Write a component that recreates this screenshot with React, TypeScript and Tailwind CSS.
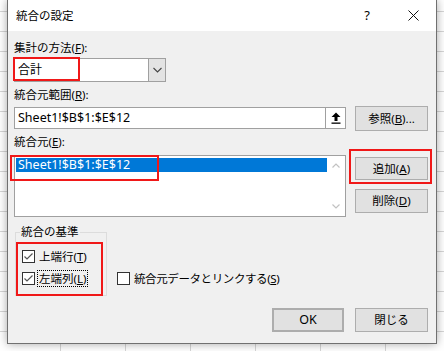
import React from "react";

const font = "font-['Noto_Sans','Noto_Sans_CJK_JP',sans-serif]";

function Key({ k }: { k: string }) {
  return <span className="underline underline-offset-[1px]">{k}</span>;
}

function Btn({ children, className = "" }: { children: React.ReactNode; className?: string }) {
  return (
    <div
      className={`flex items-center justify-center bg-[#e1e1e1] border border-[#adadad] text-[11.5px] leading-[16px] text-black ${className}`}
    >
      {children}
    </div>
  );
}

function CheckBox({ checked }: { checked: boolean }) {
  return (
    <div className="w-[13px] h-[13px] border border-[#333] bg-white flex items-center justify-center">
      {checked && (
        <svg width="11" height="11" viewBox="0 0 11 11">
          <polyline points="1.5,5.5 4,8 9.5,2.5" fill="none" stroke="#555" strokeWidth="1.2" />
        </svg>
      )}
    </div>
  );
}

function CheckRow({ checked, label, k, focus = false }: { checked: boolean; label: string; k: string; focus?: boolean }) {
  return (
    <div className="flex items-center gap-[2px] h-[18px]">
      <CheckBox checked={checked} />
      <span
        className={`px-[1px] border text-[11.5px] leading-[15px] ${focus ? "border-dotted border-black" : "border-transparent"}`}
      >
        {label}(<Key k={k} />)
      </span>
    </div>
  );
}

export default function App() {
  return (
    <div
      className={`relative w-[444px] h-[351px] overflow-hidden bg-white bg-[linear-gradient(to_right,#d6d6d6_1px,transparent_1px),linear-gradient(to_bottom,#d6d6d6_1px,transparent_1px)] bg-[size:65px_20px] bg-[position:60px_11px] ${font}`}
    >
      <div className="ml-[7px] w-[430px] h-[344px] flex flex-col border-x border-b border-[#707070] shadow-[0_0_9px_rgba(0,0,0,0.35)]">
        {/* title bar */}
        <div className="h-[31px] bg-white flex items-center">
          <span className="pl-[8px] text-[11.5px] leading-[16px] text-black">統合の設定</span>
          <div className="ml-auto flex h-full">
            <div className="w-[46px] flex items-center justify-center text-[13px] text-black">?</div>
            <div className="w-[46px] flex items-center justify-center">
              <svg width="11" height="11" viewBox="0 0 11 11">
                <path d="M0.5 0.5 L10.5 10.5 M10.5 0.5 L0.5 10.5" stroke="#111" strokeWidth="1" />
              </svg>
            </div>
          </div>
        </div>

        {/* body */}
        <div className="flex-1 bg-[#f0f0f0] pl-[6px] pr-[8px] pt-[9px] text-black text-[11.5px] leading-[16px]">
          <div>
            集計の方法(<Key k="F" />):
          </div>
          <div className="mt-[2px] w-[152px] h-[24px] flex border border-[#a0a0a0] bg-white">
            <div className="flex-1 flex items-center pl-[3px] text-[12px]">合計</div>
            <div className="w-[17px] bg-[#e3e3e3] border-l border-[#a0a0a0] flex items-center justify-center">
              <svg width="9" height="6" viewBox="0 0 9 6">
                <polyline points="0.5,1 4.5,5 8.5,1" fill="none" stroke="#444" strokeWidth="1.1" />
              </svg>
            </div>
          </div>

          <div className="mt-[5px]">
            統合元範囲(<Key k="R" />):
          </div>
          <div className="mt-[3px] flex items-start gap-[9px]">
            <div className="mt-[1px] w-[332px] h-[22px] flex border border-[#a0a0a0] bg-white">
              <div className="flex-1 flex items-center pl-[3px] text-[12.5px]">Sheet1!$B$1:$E$12</div>
              <div className="w-[20px] border-l border-[#a0a0a0] flex items-center justify-center">
                <svg width="10" height="12" viewBox="0 0 10 12">
                  <polygon points="5,0.5 9.5,5 6.5,5 6.5,9 3.5,9 3.5,5 0.5,5" fill="#000" />
                  <rect x="0.5" y="10.5" width="9" height="1.3" fill="#000" />
                </svg>
              </div>
            </div>
            <Btn className="w-[73px] h-[25px]">
              参照(<Key k="B" />)...
            </Btn>
          </div>

          <div className="mt-[3px]">
            統合元(<Key k="E" />):
          </div>
          <div className="mt-[5px] flex items-start gap-[9px]">
            <div className="w-[332px] h-[62px] border border-[#a0a0a0] bg-white flex">
              <div className="flex-1 pl-[1px] pt-[2px]">
                <div className="h-[14px] bg-[#0078d7] text-white flex items-center pl-[2px] leading-[14px] text-[12.5px]">
                  Sheet1!$B$1:$E$12
                </div>
              </div>
              <div className="w-[18px] flex flex-col items-center justify-between py-[7px]">
                <svg width="8" height="5" viewBox="0 0 8 5">
                  <polyline points="0.5,4.5 4,1 7.5,4.5" fill="none" stroke="#c2c2c2" strokeWidth="1.2" />
                </svg>
                <svg width="8" height="5" viewBox="0 0 8 5">
                  <polyline points="0.5,0.5 4,4 7.5,0.5" fill="none" stroke="#c2c2c2" strokeWidth="1.2" />
                </svg>
              </div>
            </div>
            <div className="flex flex-col gap-[9px] pt-[2px]">
              <Btn className="w-[73px] h-[23px]">
                追加(<Key k="A" />)
              </Btn>
              <Btn className="w-[73px] h-[24px]">
                削除(<Key k="D" />)
              </Btn>
            </div>
          </div>

          <div className="mt-[7px] flex items-end">
            <fieldset className="ml-[1px] w-[92px] border border-[#dcdcdc] pl-[4px] pb-[8px]">
              <legend className="px-[1px]">統合の基準</legend>
              <div className="pl-[2px] pt-[7px] flex flex-col gap-[4px]">
                <CheckRow checked label="上端行" k="T" />
                <CheckRow checked label="左端列" k="L" focus />
              </div>
            </fieldset>
            <div className="ml-[10px] mb-[9px] tracking-[-0.4px]">
              <CheckRow checked={false} label="統合元データとリンクする" k="S" />
            </div>
          </div>

          <div className="mt-[12px] flex justify-end gap-[11px]">
            <Btn className="w-[72px] h-[24px] border-2 border-[#0078d7] text-[12.5px]">OK</Btn>
            <Btn className="w-[73px] h-[24px]">閉じる</Btn>
          </div>
        </div>
      </div>

      {/* red annotation boxes */}
      <div className="absolute left-[13px] top-[57px] w-[67px] h-[24px] border-2 border-[#f01818]" />
      <div className="absolute left-[10px] top-[155px] w-[149px] h-[26px] border-2 border-[#f01818]" />
      <div className="absolute left-[349px] top-[149px] w-[83px] h-[35px] border-2 border-[#f01818]" />
      <div className="absolute left-[16px] top-[242px] w-[87px] h-[54px] border-2 border-[#f01818]" />
    </div>
  );
}
